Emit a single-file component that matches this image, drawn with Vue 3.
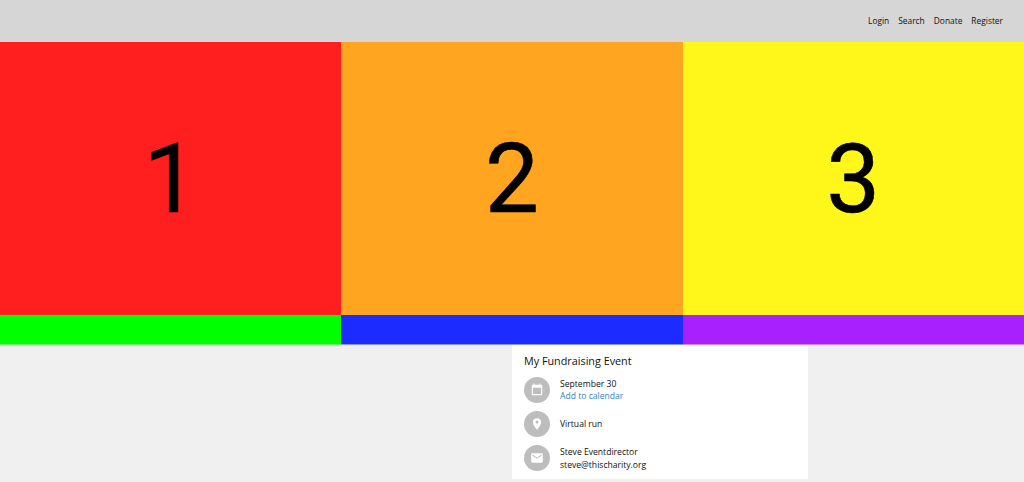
<template>
  <div class="page">
    <header class="topbar">
      <nav class="topnav">
        <a v-for="link in navLinks" :key="link" href="#">{{ link }}</a>
      </nav>
    </header>

    <section class="panels">
      <div v-for="panel in panels" :key="panel.label" class="panel" :class="panel.color">
        {{ panel.label }}
      </div>
    </section>

    <section class="strip">
      <div class="green"></div>
      <div class="blue"></div>
      <div class="purple"></div>
    </section>

    <main class="content">
      <div class="spacer"></div>
      <div class="card">
        <h2>My Fundraising Event</h2>

        <div class="row">
          <span class="icon">
            <svg width="14" height="14" viewBox="0 0 24 24">
              <path fill="#fff" d="M19 3h-1V1h-2v2H8V1H6v2H5a2 2 0 0 0-2 2v14a2 2 0 0 0 2 2h14a2 2 0 0 0 2-2V5a2 2 0 0 0-2-2zm0 16H5V8h14v11z" />
            </svg>
          </span>
          <div class="lines">
            <div>September 30</div>
            <a href="#">Add to calendar</a>
          </div>
        </div>

        <div class="row">
          <span class="icon">
            <svg width="14" height="14" viewBox="0 0 24 24">
              <path fill="#fff" d="M12 2a7 7 0 0 0-7 7c0 5.200 7 13 7 13s7-7.800 7-13a7 7 0 0 0-7-7zm0 9.500a2.500 2.500 0 1 1 0-5 2.500 2.500 0 0 1 0 5z" />
            </svg>
          </span>
          <div class="lines">
            <div>Virtual run</div>
          </div>
        </div>

        <div class="row">
          <span class="icon">
            <svg width="14" height="14" viewBox="0 0 24 24">
              <path fill="#fff" d="M20 4H4a2 2 0 0 0-2 2v12a2 2 0 0 0 2 2h16a2 2 0 0 0 2-2V6a2 2 0 0 0-2-2zm0 4-8 5-8-5V6l8 5 8-5v2z" />
            </svg>
          </span>
          <div class="lines spaced">
            <div>Steve Eventdirector</div>
            <div>steve@thischarity.org</div>
          </div>
        </div>
      </div>
    </main>
  </div>
</template>

<script setup>
const navLinks = ['Login', 'Search', 'Donate', 'Register']

const panels = [
  { label: '1', color: 'red' },
  { label: '2', color: 'orange' },
  { label: '3', color: 'yellow' },
]
</script>

<style>
html,
body {
  margin: 0;
  background: #f0f0f0;
  overflow: hidden;
}
</style>

<style scoped>
.page {
  height: 482px;
  font-family: "Open Sans", sans-serif;
  color: #111;
  background: #f0f0f0;
}

/* top bar */
.topbar {
  height: 42px;
  box-sizing: border-box;
  background: #d6d6d6;
  display: flex;
  justify-content: flex-end;
  align-items: center;
  padding: 0 21px 1px 0;
}

.topnav {
  display: flex;
  gap: 9px;
}

.topnav a {
  font-size: 8.4px;
  color: #111;
  text-decoration: none;
}

/* coloured blocks */
.panels {
  height: 273px;
  display: grid;
  grid-template-columns: repeat(3, 1fr);
}

.panel {
  display: flex;
  align-items: center;
  justify-content: center;
  font-family: Roboto, sans-serif;
  font-size: 96px;
  color: #000;
  -webkit-text-stroke: 0.6px #000;
}

.red { background: #ff1f1f; }
.orange { background: #ffa51f; }
.yellow { background: #fff71a; }

.strip {
  height: 30px;
  display: grid;
  grid-template-columns: repeat(3, 1fr);
}

.strip div {
  box-sizing: border-box;
}

.green { background: #00ff00; border-bottom: 1px solid #6fff6f; }
.blue { background: #1c2bff; border-bottom: 1px solid #8a92ff; }
.purple { background: #a920ff; border-bottom: 1px solid #cf8aff; }

/* event card */
.content {
  display: grid;
  grid-template-columns: 512px 296px;
}

.card {
  background: #fff;
  height: 134px;
  padding: 8px 12px 0;
  box-sizing: border-box;
}

.card h2 {
  margin: 0 0 9px;
  font-size: 10.8px;
  line-height: 15px;
  font-weight: 400;
}

.row {
  display: flex;
  align-items: center;
  gap: 10px;
  margin-bottom: 8px;
}

.icon {
  width: 26px;
  height: 26px;
  border-radius: 50%;
  background: #bdbdbd;
  display: flex;
  align-items: center;
  justify-content: center;
}

.lines {
  font-size: 8.6px;
  line-height: 12px;
}

.lines.spaced div + div {
  margin-top: 1px;
}

.lines a {
  color: #2f86c5;
  text-decoration: none;
}
</style>
